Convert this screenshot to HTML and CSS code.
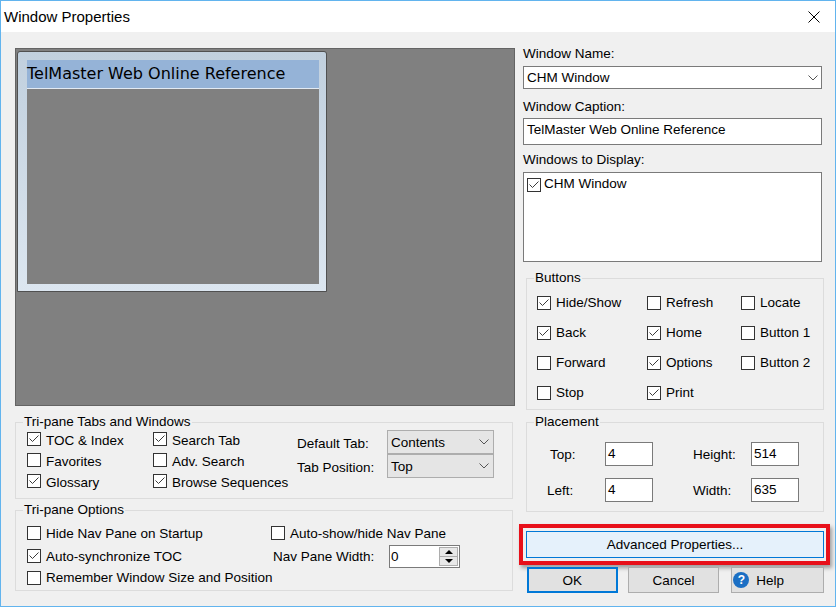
FILE: index.html
```html
<!DOCTYPE html>
<html>
<head>
<meta charset="utf-8">
<title>Window Properties</title>
<link rel="stylesheet" href="styles.css">
</head>
<body>
<div class="dialog">
  <div class="titlebar">
    <span class="title">Window Properties</span>
    <svg class="close" viewBox="0 0 12 12"><path d="M0.5 0.5L11.5 11.5M11.5 0.5L0.5 11.5"/></svg>
  </div>
  <div class="main">
    <div class="left">
      <div class="preview">
        <div class="pwin">
          <div class="pwin-title">TelMaster Web Online Reference</div>
          <div class="pwin-body"></div>
        </div>
      </div>

      <div class="group tabs-group">
        <div class="legend">Tri-pane Tabs and Windows</div>
        <div class="tabs-inner">
          <div class="tabs-grid">
            <div class="cb-item"><span class="cb"><svg viewBox="0 0 12 12"><path d="M1.5 5.5L4.5 8.5L10.5 2.5"/></svg></span><span class="txt">TOC &amp; Index</span></div>
            <div class="cb-item"><span class="cb"><svg viewBox="0 0 12 12"><path d="M1.5 5.5L4.5 8.5L10.5 2.5"/></svg></span><span class="txt">Search Tab</span></div>
            <div class="cb-item"><span class="cb"></span><span class="txt">Favorites</span></div>
            <div class="cb-item"><span class="cb"></span><span class="txt">Adv. Search</span></div>
            <div class="cb-item"><span class="cb"><svg viewBox="0 0 12 12"><path d="M1.5 5.5L4.5 8.5L10.5 2.5"/></svg></span><span class="txt">Glossary</span></div>
            <div class="cb-item"><span class="cb"><svg viewBox="0 0 12 12"><path d="M1.5 5.5L4.5 8.5L10.5 2.5"/></svg></span><span class="txt">Browse Sequences</span></div>
          </div>
          <div class="tab-selects">
            <span class="sel-label">Default Tab:</span>
            <div class="select"><span>Contents</span><svg class="chev" viewBox="0 0 10 6"><path d="M0.5 0.5L5 5L9.5 0.5"/></svg></div>
            <span class="sel-label">Tab Position:</span>
            <div class="select"><span>Top</span><svg class="chev" viewBox="0 0 10 6"><path d="M0.5 0.5L5 5L9.5 0.5"/></svg></div>
          </div>
        </div>
      </div>

      <div class="group options-group">
        <div class="legend">Tri-pane Options</div>
        <div class="opts-inner">
          <div class="opts-col1">
            <div class="cb-item"><span class="cb"></span><span class="txt">Hide Nav Pane on Startup</span></div>
            <div class="cb-item"><span class="cb"><svg viewBox="0 0 12 12"><path d="M1.5 5.5L4.5 8.5L10.5 2.5"/></svg></span><span class="txt">Auto-synchronize TOC</span></div>
            <div class="cb-item"><span class="cb"></span><span class="txt">Remember Window Size and Position</span></div>
          </div>
          <div class="opts-col2">
            <div class="cb-item"><span class="cb"></span><span class="txt">Auto-show/hide Nav Pane</span></div>
            <div class="navwidth">
              <span class="nav-label">Nav Pane Width:</span>
              <div class="spin">
                <span class="spin-val">0</span>
                <span class="spin-btns"><span class="spin-btn up"></span><span class="spin-btn down"></span></span>
              </div>
            </div>
          </div>
        </div>
      </div>
    </div>

    <div class="right">
      <div class="lbl">Window Name:</div>
      <div class="combo"><span>CHM Window</span><svg class="chev" viewBox="0 0 10 6"><path d="M0.5 0.5L5 5L9.5 0.5"/></svg></div>
      <div class="lbl lbl2">Window Caption:</div>
      <div class="textbox">TelMaster Web Online Reference</div>
      <div class="lbl lbl3">Windows to Display:</div>
      <div class="listbox">
        <div class="list-item"><span class="cb"><svg viewBox="0 0 12 12"><path d="M1.5 5.5L4.5 8.5L10.5 2.5"/></svg></span><span>CHM Window</span></div>
      </div>

      <div class="group buttons-group">
        <div class="legend">Buttons</div>
        <div class="buttons-grid">
          <div class="cb-item"><span class="cb"><svg viewBox="0 0 12 12"><path d="M1.5 5.5L4.5 8.5L10.5 2.5"/></svg></span><span class="txt">Hide/Show</span></div>
          <div class="cb-item"><span class="cb"></span><span class="txt">Refresh</span></div>
          <div class="cb-item"><span class="cb"></span><span class="txt">Locate</span></div>
          <div class="cb-item"><span class="cb"><svg viewBox="0 0 12 12"><path d="M1.5 5.5L4.5 8.5L10.5 2.5"/></svg></span><span class="txt">Back</span></div>
          <div class="cb-item"><span class="cb"><svg viewBox="0 0 12 12"><path d="M1.5 5.5L4.5 8.5L10.5 2.5"/></svg></span><span class="txt">Home</span></div>
          <div class="cb-item"><span class="cb"></span><span class="txt">Button 1</span></div>
          <div class="cb-item"><span class="cb"></span><span class="txt">Forward</span></div>
          <div class="cb-item"><span class="cb"><svg viewBox="0 0 12 12"><path d="M1.5 5.5L4.5 8.5L10.5 2.5"/></svg></span><span class="txt">Options</span></div>
          <div class="cb-item"><span class="cb"></span><span class="txt">Button 2</span></div>
          <div class="cb-item"><span class="cb"></span><span class="txt">Stop</span></div>
          <div class="cb-item"><span class="cb"><svg viewBox="0 0 12 12"><path d="M1.5 5.5L4.5 8.5L10.5 2.5"/></svg></span><span class="txt">Print</span></div>
        </div>
      </div>

      <div class="group placement-group">
        <div class="legend">Placement</div>
        <div class="place-grid">
          <span class="pl-label pl-top">Top:</span>
          <div class="num">4</div>
          <span></span>
          <span class="pl-label">Height:</span>
          <div class="num">514</div>
          <span class="pl-label">Left:</span>
          <div class="num">4</div>
          <span></span>
          <span class="pl-label">Width:</span>
          <div class="num">635</div>
        </div>
      </div>

      <div class="highlight"><button class="btn adv">Advanced Properties...</button></div>

      <div class="btn-row">
        <button class="btn ok">OK</button>
        <button class="btn cancel">Cancel</button>
        <button class="btn help"><span class="qicon">?</span><span>Help</span></button>
      </div>
    </div>
  </div>
</div>
</body>
</html>
```

FILE: styles.css
```css
* { box-sizing: border-box; }
html, body { margin: 0; padding: 0; }
body {
  width: 836px;
  height: 607px;
  overflow: hidden;
  background: #f0f0f0;
  font-family: "Liberation Sans", Arial, sans-serif;
  font-size: 13.5px;
  color: #000;
}
.dialog {
  width: 836px;
  height: 607px;
  border: 1px solid #62b4ee;
  background: #f0f0f0;
  display: flex;
  flex-direction: column;
}
.titlebar {
  height: 31px;
  flex: none;
  background: #fff;
  display: flex;
  align-items: center;
  justify-content: space-between;
  padding: 0 15px 0 3px;
}
.title { font-size: 15px; line-height: 30px; }
.close { width: 12px; height: 12px; }
.close path { stroke: #000; stroke-width: 1; fill: none; }

.main { display: flex; gap: 8px; padding-left: 14px; flex: 1; }
.left { width: 500px; padding-top: 16px; display: flex; flex-direction: column; }
.right { width: 301px; padding-top: 14px; display: flex; flex-direction: column; }

/* preview */
.preview {
  height: 358px;
  background: #808080;
  border: 1px solid #646464;
  padding: 2px 0 0 1px;
}
.pwin {
  width: 310px;
  height: 241px;
  border: 1px solid #505050;
  border-radius: 3px 3px 0 0;
  background: linear-gradient(#c1d0de, #dce6f0);
  padding: 8px 7px 7px 9px;
  display: flex;
  flex-direction: column;
}
.pwin-title {
  height: 29px;
  flex: none;
  background: #95b3d7;
  border-bottom: 1px solid #e2eaf3;
  font-family: "DejaVu Sans", Verdana, sans-serif;
  font-size: 16px;
  line-height: 28px;
  white-space: nowrap;
}
.pwin-body { flex: 1; background: #808080; }

/* groups */
.group { border: 1px solid #dcdcdc; }
.legend {
  width: max-content;
  margin: -9px 0 0 7px;
  padding: 0 1px;
  background: #f0f0f0;
  line-height: 16px;
}
.tabs-group { width: 498px; height: 77px; margin-top: 16px; }
.options-group { width: 498px; height: 81px; margin-top: 11px; }
.buttons-group { width: 298px; height: 132px; margin: 16px 0 0 3px; }
.placement-group { width: 298px; height: 90px; margin: 12px 0 0 3px; }

/* checkboxes */
.cb-item { display: flex; align-items: center; white-space: nowrap; }
.cb {
  width: 14px;
  height: 14px;
  flex: none;
  border: 1px solid #333;
  background: #fff;
  margin-right: 5px;
  display: flex;
}
.cb svg { width: 12px; height: 12px; }
.cb path { fill: none; stroke: #3a3a3a; stroke-width: 1; }

.tabs-inner { display: flex; padding-left: 11px; }
.tabs-grid {
  display: grid;
  grid-template-columns: 126px 144px;
  grid-auto-rows: 21px;
  margin-top: -2px;
}
.tabs-grid .txt { padding-top: 3px; }
.tab-selects {
  display: grid;
  grid-template-columns: 90px 107px;
  grid-template-rows: 24px 24px;
  align-items: center;
}
.sel-label { padding-top: 2px; }
.select {
  height: 24px;
  border: 1px solid #adadad;
  background: #e5e5e5;
  display: flex;
  align-items: center;
  justify-content: space-between;
  padding: 0 4px 0 3px;
}
.chev { width: 10px; height: 6px; }
.chev path { fill: none; stroke: #555; stroke-width: 1; }

.opts-inner { display: flex; padding-left: 11px; margin-top: 3px; }
.opts-col1 { width: 244px; display: grid; grid-template-rows: 24px 22px 21px; }
.opts-col2 { display: grid; grid-template-rows: 24px 22px; }
.navwidth { display: flex; align-items: center; }
.nav-label { width: 116px; margin-left: 2px; }
.spin {
  display: flex;
  width: 71px;
  height: 23px;
  border: 1px solid #7a7a7a;
  background: #fff;
  flex: none;
}
.spin-val { flex: 1; padding-left: 1px; line-height: 21px; }
.spin-btns { width: 19px; display: flex; flex-direction: column; margin: 1px 1px 1px 0; }
.spin-btn {
  flex: 1;
  background: #e8e8e8;
  border: 1px solid #adadad;
  display: flex;
  align-items: center;
  justify-content: center;
}
.spin-btn.down { border-top: none; }
.spin-btn.up::before {
  content: "";
  border-left: 4px solid transparent;
  border-right: 4px solid transparent;
  border-bottom: 4px solid #000;
}
.spin-btn.down::before {
  content: "";
  border-left: 4px solid transparent;
  border-right: 4px solid transparent;
  border-top: 4px solid #000;
}

/* right column */
.lbl { line-height: 16px; }
.lbl2 { margin-top: 10px; }
.lbl3 { margin-top: 7px; }
.combo {
  width: 299px;
  height: 23px;
  margin-top: 4px;
  border: 1px solid #7a7a7a;
  background: #fff;
  display: flex;
  align-items: center;
  justify-content: space-between;
  padding: 0 3px 0 3px;
}
.textbox {
  width: 299px;
  height: 27px;
  margin-top: 3px;
  border: 1px solid #7a7a7a;
  background: #fff;
  padding-left: 3px;
  line-height: 22px;
}
.listbox {
  width: 299px;
  height: 90px;
  margin-top: 4px;
  border: 1px solid #7a7a7a;
  background: #fff;
  padding: 3px;
}
.list-item { display: flex; align-items: flex-start; line-height: 16px; }
.list-item .cb { margin: 2px 3px 0 0; }

.buttons-grid {
  display: grid;
  grid-template-columns: 110px 94px 1fr;
  grid-auto-rows: 30px;
  margin: 2px 0 0 10px;
}
.buttons-grid .txt { padding-bottom: 2px; }

.place-grid {
  display: grid;
  grid-template-columns: 58px 48px 40px 58px 48px;
  grid-template-rows: 24px 24px;
  row-gap: 12px;
  align-items: center;
  margin: 12px 0 0 20px;
}
.pl-top { padding-left: 3px; }
.num {
  height: 24px;
  border: 1px solid #7a7a7a;
  background: #fff;
  padding-left: 2px;
  line-height: 22px;
}

/* buttons */
.btn {
  font: inherit;
  color: #000;
  height: 26px;
  background: #e1e1e1;
  border: 1px solid #adadad;
  padding: 0;
  margin: 0;
}
.highlight {
  width: 311px;
  height: 41px;
  margin: 12px 0 0 -4px;
  border: 4px solid #e8101a;
  padding: 3px 2px 3px 3px;
  box-shadow: 2px 3px 4px rgba(0, 0, 0, 0.35);
}
.adv {
  width: 100%;
  height: 100%;
  background: #e5f1fb;
  border-color: #0078d7;
}
.btn-row { display: flex; margin-top: 2px; padding-left: 4px; }
.ok { width: 91px; border: 2px solid #0078d7; }
.cancel { width: 92px; margin-left: 10px; }
.help {
  width: 93px;
  margin-left: 12px;
  display: flex;
  align-items: center;
  padding-left: 1px;
  gap: 7px;
}
.qicon {
  width: 16px;
  height: 16px;
  border-radius: 50%;
  background: #1b6fc4;
  color: #fff;
  font-weight: bold;
  font-size: 12px;
  line-height: 16px;
  text-align: center;
}
```
